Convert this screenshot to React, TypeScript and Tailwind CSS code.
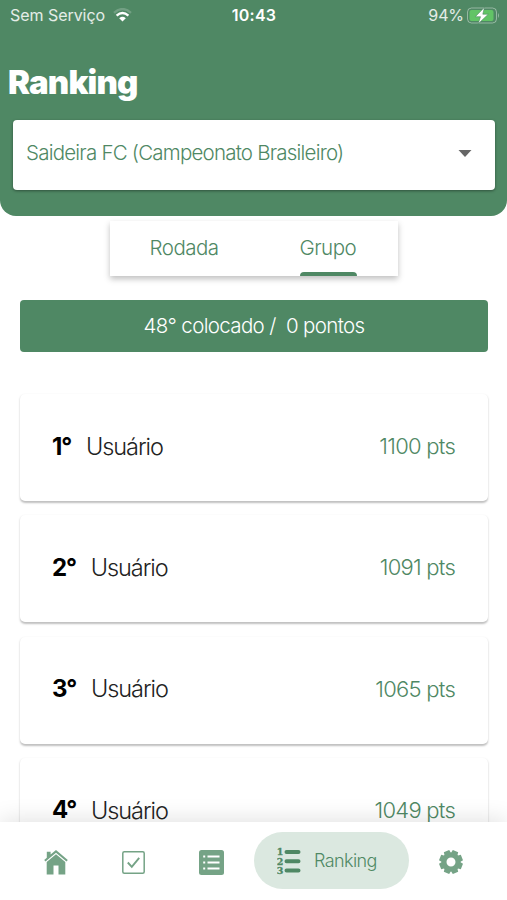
const users = [
  { position: '1°', name: 'Usuário', points: '1100 pts' },
  { position: '2°', name: 'Usuário', points: '1091 pts' },
  { position: '3°', name: 'Usuário', points: '1065 pts' },
  { position: '4°', name: 'Usuário', points: '1049 pts' },
];

const StatusBar = () => {
  return (
    <div className="h-[30px] pl-[10px] pr-[7px] grid grid-cols-3 items-center text-white/85">
      <div className="flex items-center gap-[8px]">
        <span className="text-[16px] tracking-[-0.05px] whitespace-nowrap">Sem Serviço</span>
        <svg width="19" height="14" viewBox="0 0 19 14" fill="none">
          <path d="M1 4.8Q9.500 -2.600 18 4.800" stroke="#fff" strokeOpacity="0.2" strokeWidth="2.400" />
          <path d="M3.600 7.600Q9.500 2.400 15.400 7.600" stroke="#fff" strokeWidth="2.400" />
          <path d="M6.200 10.200Q9.500 7.500 12.800 10.200L9.500 13.600Z" fill="#fff" />
        </svg>
      </div>
      <span className="pr-[2px] text-center text-[16px] font-semibold tracking-[0.2px] text-white">10:43</span>
      <div className="flex items-center justify-end gap-[3px]">
        <span className="text-[16px] tracking-[-0.1px]">94%</span>
        <svg width="33" height="17" viewBox="0 0 33 17">
          <rect x="0.500" y="1" width="29" height="15" rx="4" fill="none" stroke="#fff" strokeOpacity="0.4" />
          <rect x="2.500" y="3" width="24" height="11" rx="2" fill="#62c466" />
          <path d="M31 6v5q2-2.500 0-5" fill="#fff" fillOpacity="0.4" />
          <path d="M17.500 0.300L8.300 9.700H13.500L11.200 16.800L21.300 7.200H15.800Z" fill="#fff" stroke="#4f8864" strokeWidth="0.600" />
        </svg>
      </div>
    </div>
  );
};

const Header = () => {
  return (
    <header className="h-[216px] bg-[#4f8864] rounded-b-[16px]">
      <StatusBar />
      <h1 className="mt-[32px] ml-[8px] h-[40px] leading-[40px] text-[33px] font-black tracking-[-0.85px] text-white">Ranking</h1>
      <div className="mt-[18px] ml-[13px] mr-[12px] h-[70px] pl-[13px] pr-[23px] flex items-center justify-between rounded-[4px] bg-white shadow-[0_1px_3px_rgba(0,0,0,0.4)]">
        <span className="pb-[4px] text-[20.5px] font-light tracking-[-0.78px] text-[#4f8864]">Saideira FC (Campeonato Brasileiro)</span>
        <svg className="-mt-[4px]" width="14" height="7" viewBox="0 0 14 7">
          <path d="M0.500 0H13.500L7 7Z" fill="#666" />
        </svg>
      </div>
    </header>
  );
};

const Tabs = () => {
  return (
    <div className="mt-[5px] mx-auto w-[288px] h-[55px] flex justify-between pl-[40px] pr-[41px] bg-white text-[20.5px] font-light tracking-[-0.5px] text-[#4f8864] shadow-[0_3px_6px_rgba(0,0,0,0.25)]">
      <span className="leading-[54px]">Rodada</span>
      <div className="w-[57px] flex flex-col justify-between">
        <span className="h-[50px] leading-[54px]">Grupo</span>
        <span className="h-[4px] w-full rounded-t-[4px] bg-[#4f8864]"></span>
      </div>
    </div>
  );
};

const UserCard = ({ position, name, points }: { position: string; name: string; points: string }) => {
  return (
    <li className="h-[107px] shrink-0 pl-[32px] pr-[33px] pb-[2px] flex items-center rounded-[5px] bg-white shadow-[0_1.5px_2px_rgba(0,0,0,0.25)]">
      <span className="text-[24px] font-bold tracking-[-1.2px] text-black">{position}</span>
      <span className="ml-[15px] text-[23.5px] font-light tracking-[-1.05px] text-[#222]">{name}</span>
      <span className="ml-auto text-[22px] font-light tracking-[-0.75px] text-[#4f8864]">{points}</span>
    </li>
  );
};

const HomeIcon = () => {
  return (
    <svg width="24" height="25" viewBox="0 0 24 25" fill="#75a386">
      <path d="M12 0L23.800 10L22.500 11.500L12 2.700L1.500 11.500L0.200 10L2.800 7.800V1.800H6.600V4.600Z" />
      <path d="M12 4.300L21.300 12.100V24.500H14.500V15.500H9.500V24.500H2.700V12.100Z" />
    </svg>
  );
};

const CheckIcon = () => {
  return (
    <svg width="23" height="23" viewBox="0 0 23 23" fill="none" stroke="#75a386">
      <rect x="0.800" y="0.800" width="21.400" height="21.400" rx="1.500" strokeWidth="1.500" />
      <path d="M5.800 11.500L9.800 15.800L17.200 6.800" strokeWidth="1.900" />
    </svg>
  );
};

const ListIcon = () => {
  return (
    <svg width="25" height="25" viewBox="0 0 25 25">
      <rect width="25" height="25" rx="2.500" fill="#75a386" />
      <path d="M8.500 6.500H20.500M8.500 12.500H20.500M8.500 18.500H20.500M4.200 6.500H6.200M4.200 12.500H6.200M4.200 18.500H6.200" stroke="#fff" strokeWidth="1.800" />
    </svg>
  );
};

const RankingIcon = () => {
  return (
    <svg className="shrink-0" width="24" height="28" viewBox="0 0 24 28">
      <path d="M9.500 5H21.500M9.500 14.200H21.500M9.500 23.500H21.500" stroke="#4f8864" strokeWidth="4" strokeLinecap="round" />
      <g className="font-['DejaVu_Serif',serif] text-[9.5px] font-bold" fill="#4f8864" stroke="#4f8864" strokeWidth="0.300">
        <text x="-0.300" y="8.300">1</text>
        <text x="-0.300" y="17.600">2</text>
        <text x="-0.300" y="27">3</text>
      </g>
    </svg>
  );
};

const teeth = [0, 45, 90, 135, 180, 225, 270, 315];

const GearIcon = () => {
  return (
    <svg width="24" height="24" viewBox="-12 -12 24 24">
      <circle r="7" fill="none" stroke="#75a386" strokeWidth="5" />
      {teeth.map((angle) => (
        <path key={angle} d="M-3.500 -8L-2.900 -11.800H2.900L3.500 -8Z" fill="#75a386" transform={`rotate(${angle + 22.5})`} />
      ))}
    </svg>
  );
};

const BottomNav = () => {
  return (
    <nav className="relative h-[78px] shrink-0 bg-white flex shadow-[0_-2px_22px_rgba(0,0,0,0.12)]">
      <div className="w-[112px] pt-[28px] flex justify-center">
        <HomeIcon />
      </div>
      <div className="w-[43px] pt-[28.5px] flex justify-center">
        <CheckIcon />
      </div>
      <div className="w-[99px] pt-[28px] pl-[14px] flex justify-center">
        <ListIcon />
      </div>
      <div className="mt-[10px] w-[155px] h-[57px] pl-[23px] flex items-center rounded-full bg-[#dbe8e0] text-[#4f8864]">
        <RankingIcon />
        <span className="ml-[13px] text-[18px] font-light tracking-[-0.6px]">Ranking</span>
      </div>
      <div className="w-[84px] pt-[28px] flex justify-center">
        <GearIcon />
      </div>
    </nav>
  );
};

const App = () => {
  return (
    <div className="w-[507px] h-[900px] flex flex-col overflow-hidden bg-white font-['Inter','Liberation_Sans',sans-serif]">
      <Header />
      <main className="flex-1 min-h-0 overflow-hidden">
        <Tabs />
        <div className="mt-[24px] ml-[20px] mr-[19px] h-[52px] pt-[1px] flex items-center justify-center rounded-[4px] bg-[#4f8864] text-[20.5px] font-light tracking-[-0.65px] whitespace-pre text-white">
          48° colocado /  0 pontos
        </div>
        <ul className="mt-[42px] ml-[20px] mr-[19px] flex flex-col gap-[14.3px]">
          {users.map((user) => (
            <UserCard key={user.position} {...user} />
          ))}
        </ul>
      </main>
      <BottomNav />
    </div>
  );
};

export default App;
